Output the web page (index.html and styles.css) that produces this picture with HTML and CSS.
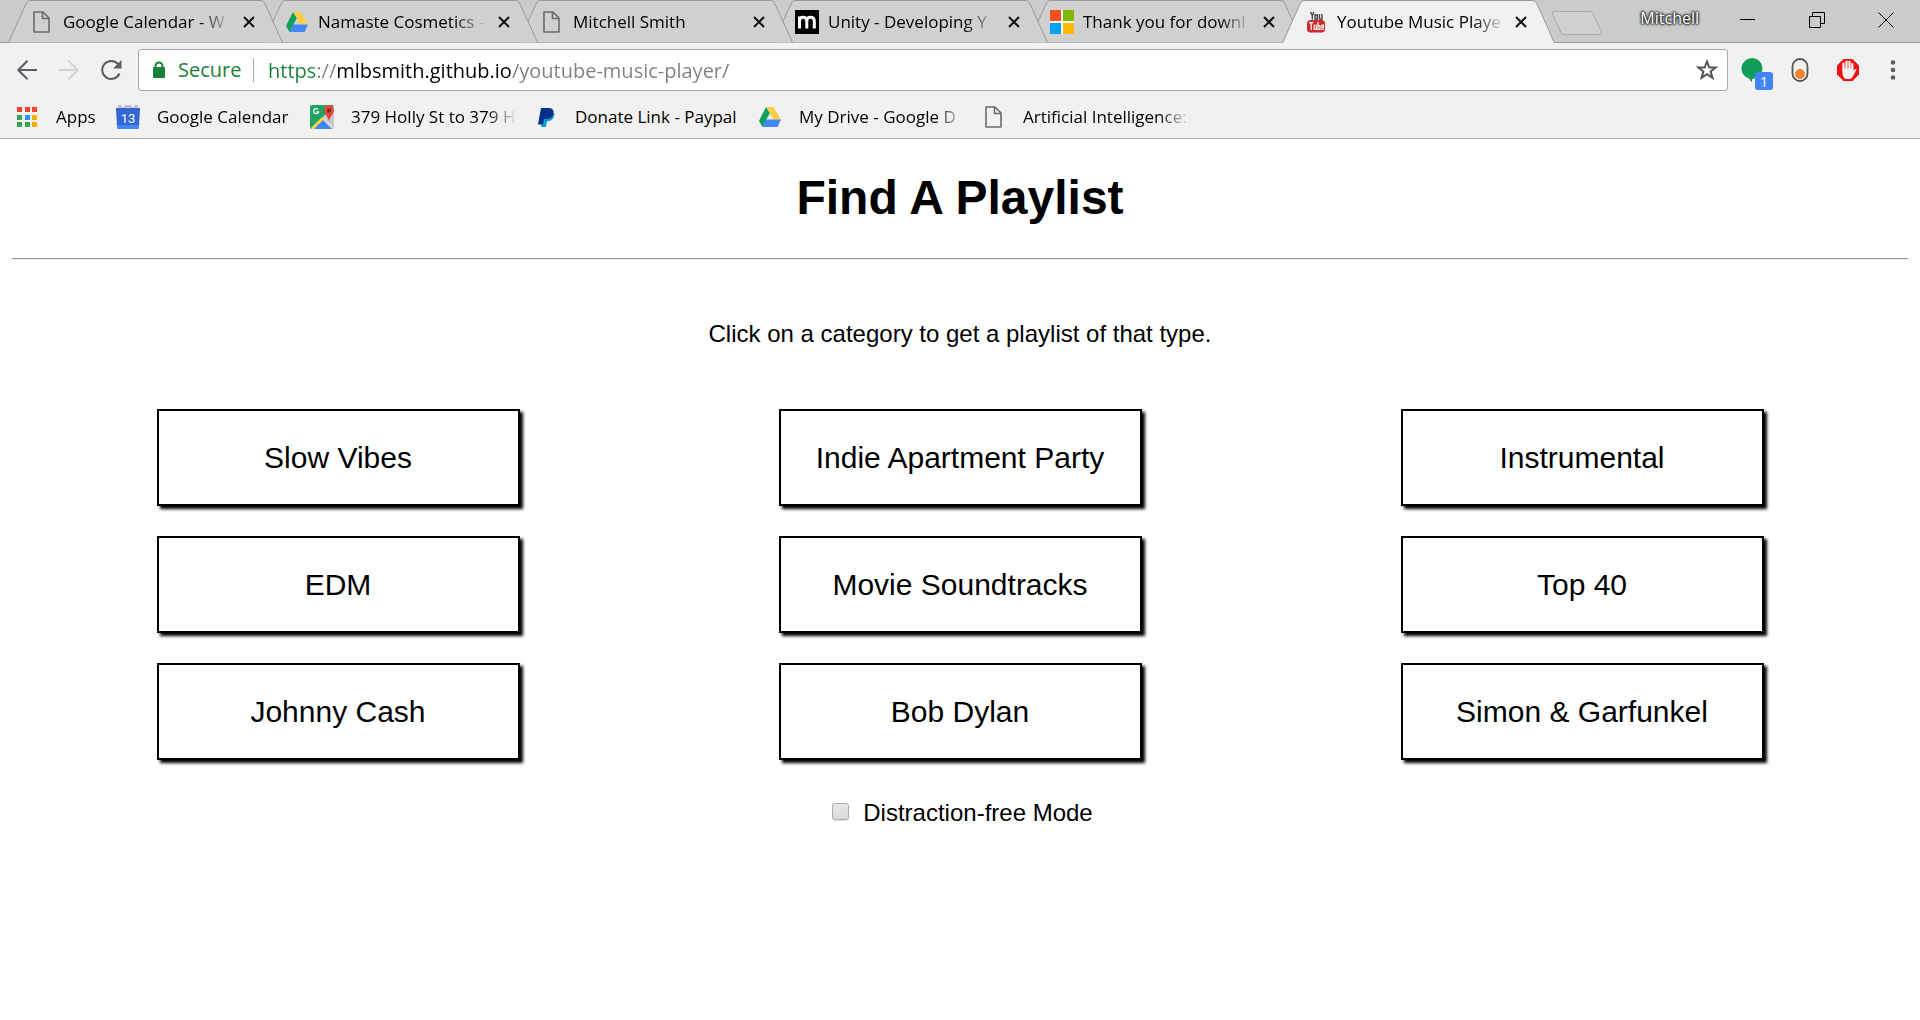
FILE: index.html
```html
<!DOCTYPE html>
<html lang="en">
<head>
<meta charset="utf-8">
<title>Youtube Music Player</title>
<link rel="stylesheet" href="styles.css">
</head>
<body>
<svg class="sprite" aria-hidden="true">
  <symbol id="file" viewBox="0 0 24 24"><path d="M4 2h9l6 6v14H4z M12.500 2v6.500H19" fill="none" stroke="#6b6b6b" stroke-width="1.600" stroke-linejoin="round"/></symbol>
  <symbol id="drive" viewBox="0 0 24 24"><path d="M8 2h7.500l7.500 12.500h-7.500z" fill="#ffcf43"/><path d="M8 2l3.800 6.300L4.500 22 1 16z" fill="#11a05c"/><path d="M8 14.500h15L19.500 22h-15z" fill="#4386f5"/></symbol>
  <symbol id="close" viewBox="0 0 12 12"><path d="M1 1l10 10M11 1L1 11" stroke="#111" stroke-width="2" fill="none"/></symbol>
  <symbol id="tabshape" viewBox="0 0 275 43"><path d="M0.500 42.500L18 4Q19.500 0.500 22 0.500H253Q255.500 0.500 257 4L274.500 42.500" stroke="#999"/></symbol>
</svg>

<header class="browser">
  <div class="tabstrip">
    <nav class="tabs" aria-label="Open tabs">
      <div class="tab t1">
        <svg class="shape"><use href="#tabshape"/></svg>
        <svg class="ico"><use href="#file"/></svg>
        <span class="title">Google Calendar - W</span>
        <button class="close" aria-label="Close tab"><svg><use href="#close"/></svg></button>
      </div>
      <div class="tab t2">
        <svg class="shape"><use href="#tabshape"/></svg>
        <svg class="ico"><use href="#drive"/></svg>
        <span class="title">Namaste Cosmetics -</span>
        <button class="close" aria-label="Close tab"><svg><use href="#close"/></svg></button>
      </div>
      <div class="tab t3">
        <svg class="shape"><use href="#tabshape"/></svg>
        <svg class="ico"><use href="#file"/></svg>
        <span class="title">Mitchell Smith</span>
        <button class="close" aria-label="Close tab"><svg><use href="#close"/></svg></button>
      </div>
      <div class="tab t4">
        <svg class="shape"><use href="#tabshape"/></svg>
        <svg class="ico" viewBox="0 0 24 24"><path d="M0 0h24v24H0z"/><path d="M4.500 18.500V6.500M4.500 11Q4.500 7.300 8 7.300T11.800 11V18.500M11.800 11Q11.800 7.300 15.500 7.300T19.300 11V18.500" fill="none" stroke="#fff" stroke-width="3"/></svg>
        <span class="title">Unity - Developing Y</span>
        <button class="close" aria-label="Close tab"><svg><use href="#close"/></svg></button>
      </div>
      <div class="tab t5">
        <svg class="shape"><use href="#tabshape"/></svg>
        <svg class="ico" viewBox="0 0 24 24"><path fill="#fff" d="M11 0h2v24h-2zM0 11h24v2H0z"/><path fill="#f4511e" d="M0 0h11v11H0z"/><path fill="#7fba00" d="M13 0h11v11H13z"/><path fill="#00a1f1" d="M0 13h11v11H0z"/><path fill="#ffb900" d="M13 13h11v11H13z"/></svg>
        <span class="title">Thank you for downl</span>
        <button class="close" aria-label="Close tab"><svg><use href="#close"/></svg></button>
      </div>
      <div class="tab active">
        <svg class="shape" viewBox="0 0 273 43"><path d="M0.500 43L18 4Q19.500 0.500 22 0.500H251Q253.500 0.500 255 4L272.500 43" stroke="#999"/></svg>
        <svg class="ico" viewBox="0 0 24 24"><rect x="3" y="10" width="18" height="12.500" rx="3.500" fill="#cc2a2d"/><path d="M6.500 2l1.800 3.600L10 2M8.300 5.500V9.500M11 5h2.300v4H11zM15.500 4v5h2.500V4" fill="none" stroke="#444" stroke-width="1.400"/><path d="M5 12.600h4.400M7.200 12.600v7.400M10.200 14.500v5h2v-5M14 12v7.500h2v-4h-2M20 17.500h-2v-2.500h1.500v2.500M18 17v2.500h2" fill="none" stroke="#fff" stroke-width="1.200"/></svg>
        <span class="title">Youtube Music Playe</span>
        <button class="close" aria-label="Close tab"><svg><use href="#close"/></svg></button>
      </div>
    </nav>
    <button class="newtab" aria-label="New tab"><svg viewBox="0 0 52 26"><path d="M3 1.500H39Q41 1.500 42 3.500L50.500 22Q51 24.500 49 24.500H13Q11 24.500 10 22.500L1.500 4Q1 1.500 3 1.500z" fill="#d0d0d0" stroke="#aaa"/></svg></button>
    <div class="window">
      <button class="user">Mitchell</button>
      <button class="win" aria-label="Minimize"><svg viewBox="0 0 16 16"><path d="M0 7.500h15"/></svg></button>
      <button class="win" aria-label="Restore"><svg viewBox="0 0 16 16"><path d="M0.500 4.500h11v11h-11zM3.500 4.500v-4h12v11h-4"/></svg></button>
      <button class="win" aria-label="Close window"><svg viewBox="0 0 16 16"><path d="M0.500 0.500l15 15M15.500 0.500l-15 15"/></svg></button>
    </div>
  </div>

  <div class="toolbar">
    <button class="nav" aria-label="Back"><svg viewBox="0 0 24 24" stroke="#5a5d61"><path d="M22 12H4M12.500 2.800L3.300 12l9.200 9.200"/></svg></button>
    <button class="nav" aria-label="Forward"><svg viewBox="0 0 24 24" stroke="#d4d4d4"><path d="M2 12h18M11.500 2.800l9.200 9.200-9.200 9.200"/></svg></button>
    <button class="nav" aria-label="Reload"><svg viewBox="0 0 24 24" stroke="#5a5d61"><path d="M20.500 15.500A9 9 0 1 1 19 6"/><path d="M22.500 2v8.500H14z" fill="#5a5d61" stroke="none"/></svg></button>
    <form class="omnibox">
      <svg class="lock" viewBox="0 0 14 18"><rect x="1" y="6" width="12" height="11" rx="1" fill="#188038"/><path d="M3.500 7V5a3.500 3.500 0 0 1 7 0v2" fill="none" stroke="#188038" stroke-width="2"/></svg>
      <span class="secure">Secure</span>
      <input class="url" type="text" aria-label="Address" value="https://mlbsmith.github.io/youtube-music-player/">
      <button class="star" type="button" aria-label="Bookmark this page"><svg viewBox="0 0 24 24"><path d="M12 3.500l2.300 6h6.300l-5 4 1.900 6.400L12 16.200l-5.500 3.700 1.900-6.400-5-4h6.300z" fill="none" stroke="#505357" stroke-width="2"/></svg></button>
    </form>
    <button class="ext" aria-label="Hangouts, 1 notification"><svg viewBox="0 0 24 24"><path d="M12 0a10.500 10.500 0 0 1 0 21v3q-2-1-2.500-3.300A10.500 10.500 0 0 1 12 0z" fill="#0f9d58"/></svg><span class="badge">1</span></button>
    <button class="ext" aria-label="Toggle extension"><svg viewBox="0 0 24 24"><rect x="4.500" y="1" width="15" height="22" rx="7.500" fill="#f1f1f1" stroke="#555" stroke-width="1.800"/><circle cx="12" cy="16" r="5" fill="#f58233"/></svg></button>
    <button class="ext" aria-label="AdBlock"><svg viewBox="0 0 24 24"><path d="M7.500 1h9L23 7.500v9L16.500 23h-9L1 16.500v-9z" fill="#ee1111"/><path d="M7.500 13V5.500M10.500 12V3.500M13.500 12V3.500M16.300 13V6" stroke="#fff" stroke-width="2.200" stroke-linecap="round"/><path d="M6.500 10.500h10.800v2.500l2-2q1.500-.5 1 1L16.500 19q-1 2-3 2h-3q-3 0-4-5z" fill="#f3f3f3"/></svg></button>
    <button class="ext menu" aria-label="Menu"><svg viewBox="0 0 24 24" fill="#5a5d61"><circle cx="12" cy="4.500" r="2.300"/><circle cx="12" cy="12" r="2.300"/><circle cx="12" cy="19.500" r="2.300"/></svg></button>
  </div>

  <nav class="bookmarks" aria-label="Bookmarks">
    <a href="#" class="bm"><svg viewBox="0 0 24 24"><path fill="#f44336" d="M2 2h5v5H2zM10 2h5v5h-5zM17 2h5v5h-5z"/><path fill="#34a853" d="M2 10h5v5H2zM2 17h5v5H2z"/><path fill="#2196f3" d="M10 10h5v5h-5z"/><path fill="#34a853" d="M10 17h5v5h-5z"/><path fill="#f9ab00" d="M17 10h5v5h-5zM17 17h5v5h-5z"/></svg><span class="label apps">Apps</span></a>
    <a href="#" class="bm"><svg viewBox="0 0 24 24" class="cal"><path fill="#c4c4c4" d="M2 0h20v4H2z"/><path fill="#3367d6" d="M0 3h24l-1 19q0 2-2 2H3q-2 0-2-2z"/><path fill="#4285f4" d="M1 20h22v2q0 2-2 2H3q-2 0-2-2z"/><path d="M6 0h2v2H6zM16 0h2v2h-2z" fill="#fff"/><text x="12" y="18" text-anchor="middle">13</text></svg><span class="label calendar">Google Calendar</span></a>
    <a href="#" class="bm"><svg viewBox="0 0 24 24"><rect width="24" height="24" rx="2" fill="#1fa463"/><path d="M13 12L24 1v23H13z" fill="#ddd"/><path d="M12 12L1 23l1 1h3L14.500 14.500z" fill="#ffd54f"/><path d="M4 24l9-9 9 9z" fill="#4285f4"/><path d="M13 12l2.500 2.500L24 23V10z" fill="#c9c9c9"/><path d="M19 0a5 5 0 0 1 5 5.500q0 2.500-2.500 5.500-1.700 2-2.500 5-.8-3-2.500-5Q14 8 14 5.500A5 5 0 0 1 19 0z" fill="#dd4b3e"/><circle cx="19" cy="5.500" r="2" fill="#801d16"/><path d="M8 4.500A2.500 2.500 0 1 0 8.500 7H6.500" fill="none" stroke="#fff" stroke-width="1.300"/></svg><span class="label">379 Holly St to 379 H</span></a>
    <a href="#" class="bm"><svg viewBox="0 0 24 24"><path fill="#139ad6" d="M9 8h11q1 1-.5 4.500Q18 16 13 16.500L12 22H7z"/><path fill="#003087" d="M7 3h8q5.500.5 4.500 5.500T13 14h-3l-1 5.500H4z"/></svg><span class="label whole">Donate Link - Paypal</span></a>
    <a href="#" class="bm"><svg><use href="#drive"/></svg><span class="label">My Drive - Google D</span></a>
    <a href="#" class="bm"><svg><use href="#file"/></svg><span class="label">Artificial Intelligence:</span></a>
  </nav>
</header>

<main class="page">
  <h1>Find A Playlist</h1>
  <hr>
  <p class="hint">Click on a category to get a playlist of that type.</p>
  <div class="grid">
    <button class="card">Slow Vibes</button>
    <button class="card">Indie Apartment Party</button>
    <button class="card">Instrumental</button>
    <button class="card">EDM</button>
    <button class="card">Movie Soundtracks</button>
    <button class="card">Top 40</button>
    <button class="card">Johnny Cash</button>
    <button class="card">Bob Dylan</button>
    <button class="card">Simon &amp; Garfunkel</button>
  </div>
  <div class="mode">
    <input type="checkbox" id="distraction">
    <label for="distraction">Distraction-free Mode</label>
  </div>
</main>
</body>
</html>
```
FILE: styles.css
```css
* { box-sizing: border-box; }
body {
  margin: 0;
  background: #fff;
  color: #000;
  font-family: "Liberation Sans", Arial, sans-serif;
}
button { margin: 0; padding: 0; border: 0; background: none; color: inherit; font: inherit; }
svg { display: block; }
.sprite { position: absolute; width: 0; height: 0; }

.browser {
  font-family: "Open Sans", "Noto Sans", sans-serif;
  font-size: 17px;
  background: #f1f1f1;
  border-bottom: 1px solid #b0b0b0;
}

/* tab strip */
.tabstrip {
  display: flex;
  height: 43px;
  padding-left: 8px;
  background: #cbcbcb;
  box-shadow: inset 0 -1px #999;
}
.tabs { display: flex; isolation: isolate; }
.tab {
  position: relative;
  display: flex;
  align-items: center;
  width: 275px;
  height: 43px;
  padding-left: 22px;
  margin-right: -20px;
}
.t1 { z-index: 5; }
.t2 { z-index: 4; }
.t3 { z-index: 3; }
.t4 { z-index: 2; }
.t5 { z-index: 1; }
.active { z-index: 6; width: 273px; margin-left: -1px; }
.shape { position: absolute; inset: 0; z-index: -1; width: 100%; height: 43px; fill: #d0d0d0; }
.active .shape { fill: #f1f1f1; }
.ico { width: 24px; height: 24px; flex: none; }
.title {
  flex: none;
  width: 168px;
  margin-left: 9px;
  overflow: hidden;
  white-space: nowrap;
  line-height: 24px;
  mask-image: linear-gradient(to right, #000 136px, transparent 168px);
}
.active .title { width: 166px; }
.close { padding: 6px; margin-left: 6px; }
.close svg { width: 12px; height: 12px; }
.newtab { align-self: flex-start; margin: 10px 0 0 16px; }
.newtab svg { width: 52px; height: 26px; }
.window { display: flex; margin-left: auto; height: 40px; }
.user {
  margin-right: 14px;
  padding-bottom: 4px;
  font-size: 16px;
  color: #fff;
  text-shadow: 0 0 2px #222, 0 0 2px #222, 0 0 3px #222, 0 0 3px #222;
}
.win { width: 69px; display: flex; align-items: center; justify-content: center; }
.win svg { width: 16px; height: 16px; fill: none; stroke: #000; }

/* toolbar */
.toolbar { display: flex; align-items: center; height: 54px; padding: 0 6px; }
.nav { width: 42px; display: flex; justify-content: center; }
.nav svg { width: 24px; height: 24px; fill: none; stroke-width: 2; }
.omnibox {
  flex: 1;
  display: flex;
  align-items: center;
  height: 42px;
  margin-left: 6px;
  padding: 0 8px 0 13px;
  background: #fff;
  border: 1px solid #a9a9a9;
  border-radius: 3px;
  font-size: 20px;
}
.lock { width: 14px; height: 18px; }
.secure {
  width: 76px;
  margin-left: 12px;
  line-height: 24px;
  color: #188038;
  border-right: 1px solid #aaa;
  white-space: nowrap;
}
.url {
  flex: 1;
  min-width: 0;
  margin-left: 14px;
  padding: 0;
  border: 0;
  outline: 0;
  font: inherit;
  color: #222;
  background: linear-gradient(to right, #188038 47px, #808080 47px 68px, #000 68px 244px, #808080 244px);
  background-clip: text;
  -webkit-background-clip: text;
  -webkit-text-fill-color: transparent;
}
.star svg { width: 24px; height: 24px; }
.ext { position: relative; width: 48px; display: flex; justify-content: center; }
.ext svg { width: 24px; height: 24px; }
.menu { width: 42px; }
.badge {
  position: absolute;
  left: 27px;
  top: 14px;
  width: 18px;
  height: 18px;
  border-radius: 3px;
  background: #4285f4;
  color: #fff;
  font-size: 14px;
  line-height: 19px;
}

/* bookmarks bar */
.bookmarks { display: flex; gap: 19px; height: 41px; padding: 7px 15px 0; }
.bm { display: flex; align-items: center; gap: 17px; height: 26px; color: #000; text-decoration: none; }
.bm svg { width: 24px; height: 24px; flex: none; }
.cal text { font: 13px Roboto, sans-serif; fill: #fff; }
.label {
  width: 164px;
  overflow: hidden;
  white-space: nowrap;
  line-height: 24px;
  mask-image: linear-gradient(to right, #000 136px, transparent 166px);
}
.apps { width: 41px; }
.calendar { width: 134px; }
.whole { mask-image: none; }

/* page */
.page { padding: 0 12px; text-align: center; font-size: 24px; }
h1 { margin: 31px 0 33px; font-size: 48px; line-height: 55px; }
hr { margin: 0; height: 2px; border: 0; border-top: 1px solid #9a9a9a; background: #eee; }
.hint { margin: 60px 0 61px; line-height: 28px; }
.grid {
  display: grid;
  grid-template-columns: repeat(3, 1fr);
  justify-items: center;
  row-gap: 30px;
  padding: 0 15px;
}
.card {
  width: 363px;
  height: 97px;
  border: 2px solid #000;
  background: #fff;
  box-shadow: 3px 3px 3px #000;
  font-size: 30px;
}
.mode { display: flex; justify-content: center; align-items: center; gap: 14px; margin: 39px 0; padding-left: 5px; line-height: 28px; }
.mode input {
  appearance: none;
  width: 17px;
  height: 17px;
  margin: 0 0 4px;
  border: 1px solid #aaa;
  border-radius: 3px;
  background: linear-gradient(#e9e9e9, #d8d8d8);
  box-shadow: 0 1px 1px #ddd;
}
```
